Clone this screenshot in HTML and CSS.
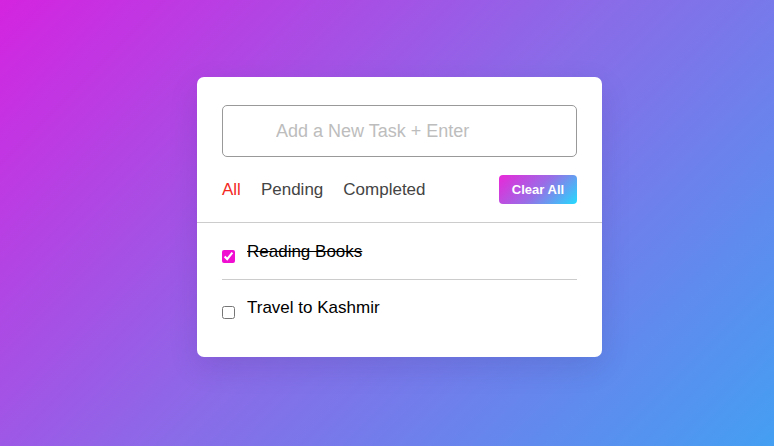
FILE: index.html
```html
<!DOCTYPE html>
<html lang="en">
<head>
<meta charset="utf-8">
<title>Todo</title>
<link rel="stylesheet" href="styles.css">
</head>
<body>
<div class="card">
  <div class="top">
    <input class="task-input" type="text" placeholder="Add a New Task + Enter">
    <div class="controls">
      <div class="filters">
        <span class="filter active">All</span>
        <span class="filter">Pending</span>
        <span class="filter">Completed</span>
      </div>
      <button class="clear-btn">Clear All</button>
    </div>
  </div>
  <ul class="task-box">
    <li class="task">
      <input type="checkbox" checked>
      <span class="name done">Reading Books</span>
    </li>
    <li class="task">
      <input type="checkbox">
      <span class="name">Travel to Kashmir</span>
    </li>
  </ul>
</div>
</body>
</html>
```
FILE: styles.css
```css
* { box-sizing: border-box; }
html, body { margin: 0; height: 100%; }
body {
  font-family: "Liberation Sans", Arial, sans-serif;
  background: linear-gradient(135deg, #d424e0 0%, #8a6be8 50%, #449ff2 100%);
  padding: 77px 0 0 197px;
  overflow: hidden;
}
.card {
  width: 405px;
  height: 280px;
  background: #fff;
  border-radius: 7px;
  box-shadow: 0 10px 30px rgba(30, 20, 80, 0.12);
}
.top {
  padding: 28px 25px 18px;
  border-bottom: 1px solid #ccc;
}
.task-input {
  display: block;
  width: 100%;
  height: 52px;
  border: 1px solid #999;
  border-radius: 5px;
  padding: 0 20px 0 53px;
  font-family: inherit;
  font-size: 18px;
  color: #333;
  outline: none;
}
.task-input::placeholder { color: #bdbdbd; }
.controls {
  margin-top: 18px;
  display: flex;
  align-items: center;
  justify-content: space-between;
  height: 29px;
}
.filters { display: flex; gap: 20px; }
.filter { font-size: 17px; color: #444; }
.filter.active { color: #f3291f; }
.clear-btn {
  width: 78px;
  height: 29px;
  border: none;
  border-radius: 4px;
  background: linear-gradient(135deg, #ea27d9 0%, #9a6ce6 50%, #23dbfe 100%);
  color: #fff;
  font-family: inherit;
  font-weight: bold;
  font-size: 13px;
  padding: 0;
}
.task-box {
  list-style: none;
  margin: 0;
  padding: 14px 25px 0;
}
.task {
  display: flex;
  align-items: flex-start;
  line-height: 30px;
  font-size: 17px;
  color: #000;
}
.task:first-child {
  padding-bottom: 12px;
  border-bottom: 1px solid #ccc;
}
.task + .task { padding-top: 13px; }
.task input {
  margin: 13px 12px 0 0;
  width: 13px;
  height: 13px;
  accent-color: #f00fd0;
}
.name.done { text-decoration: line-through; }
```
